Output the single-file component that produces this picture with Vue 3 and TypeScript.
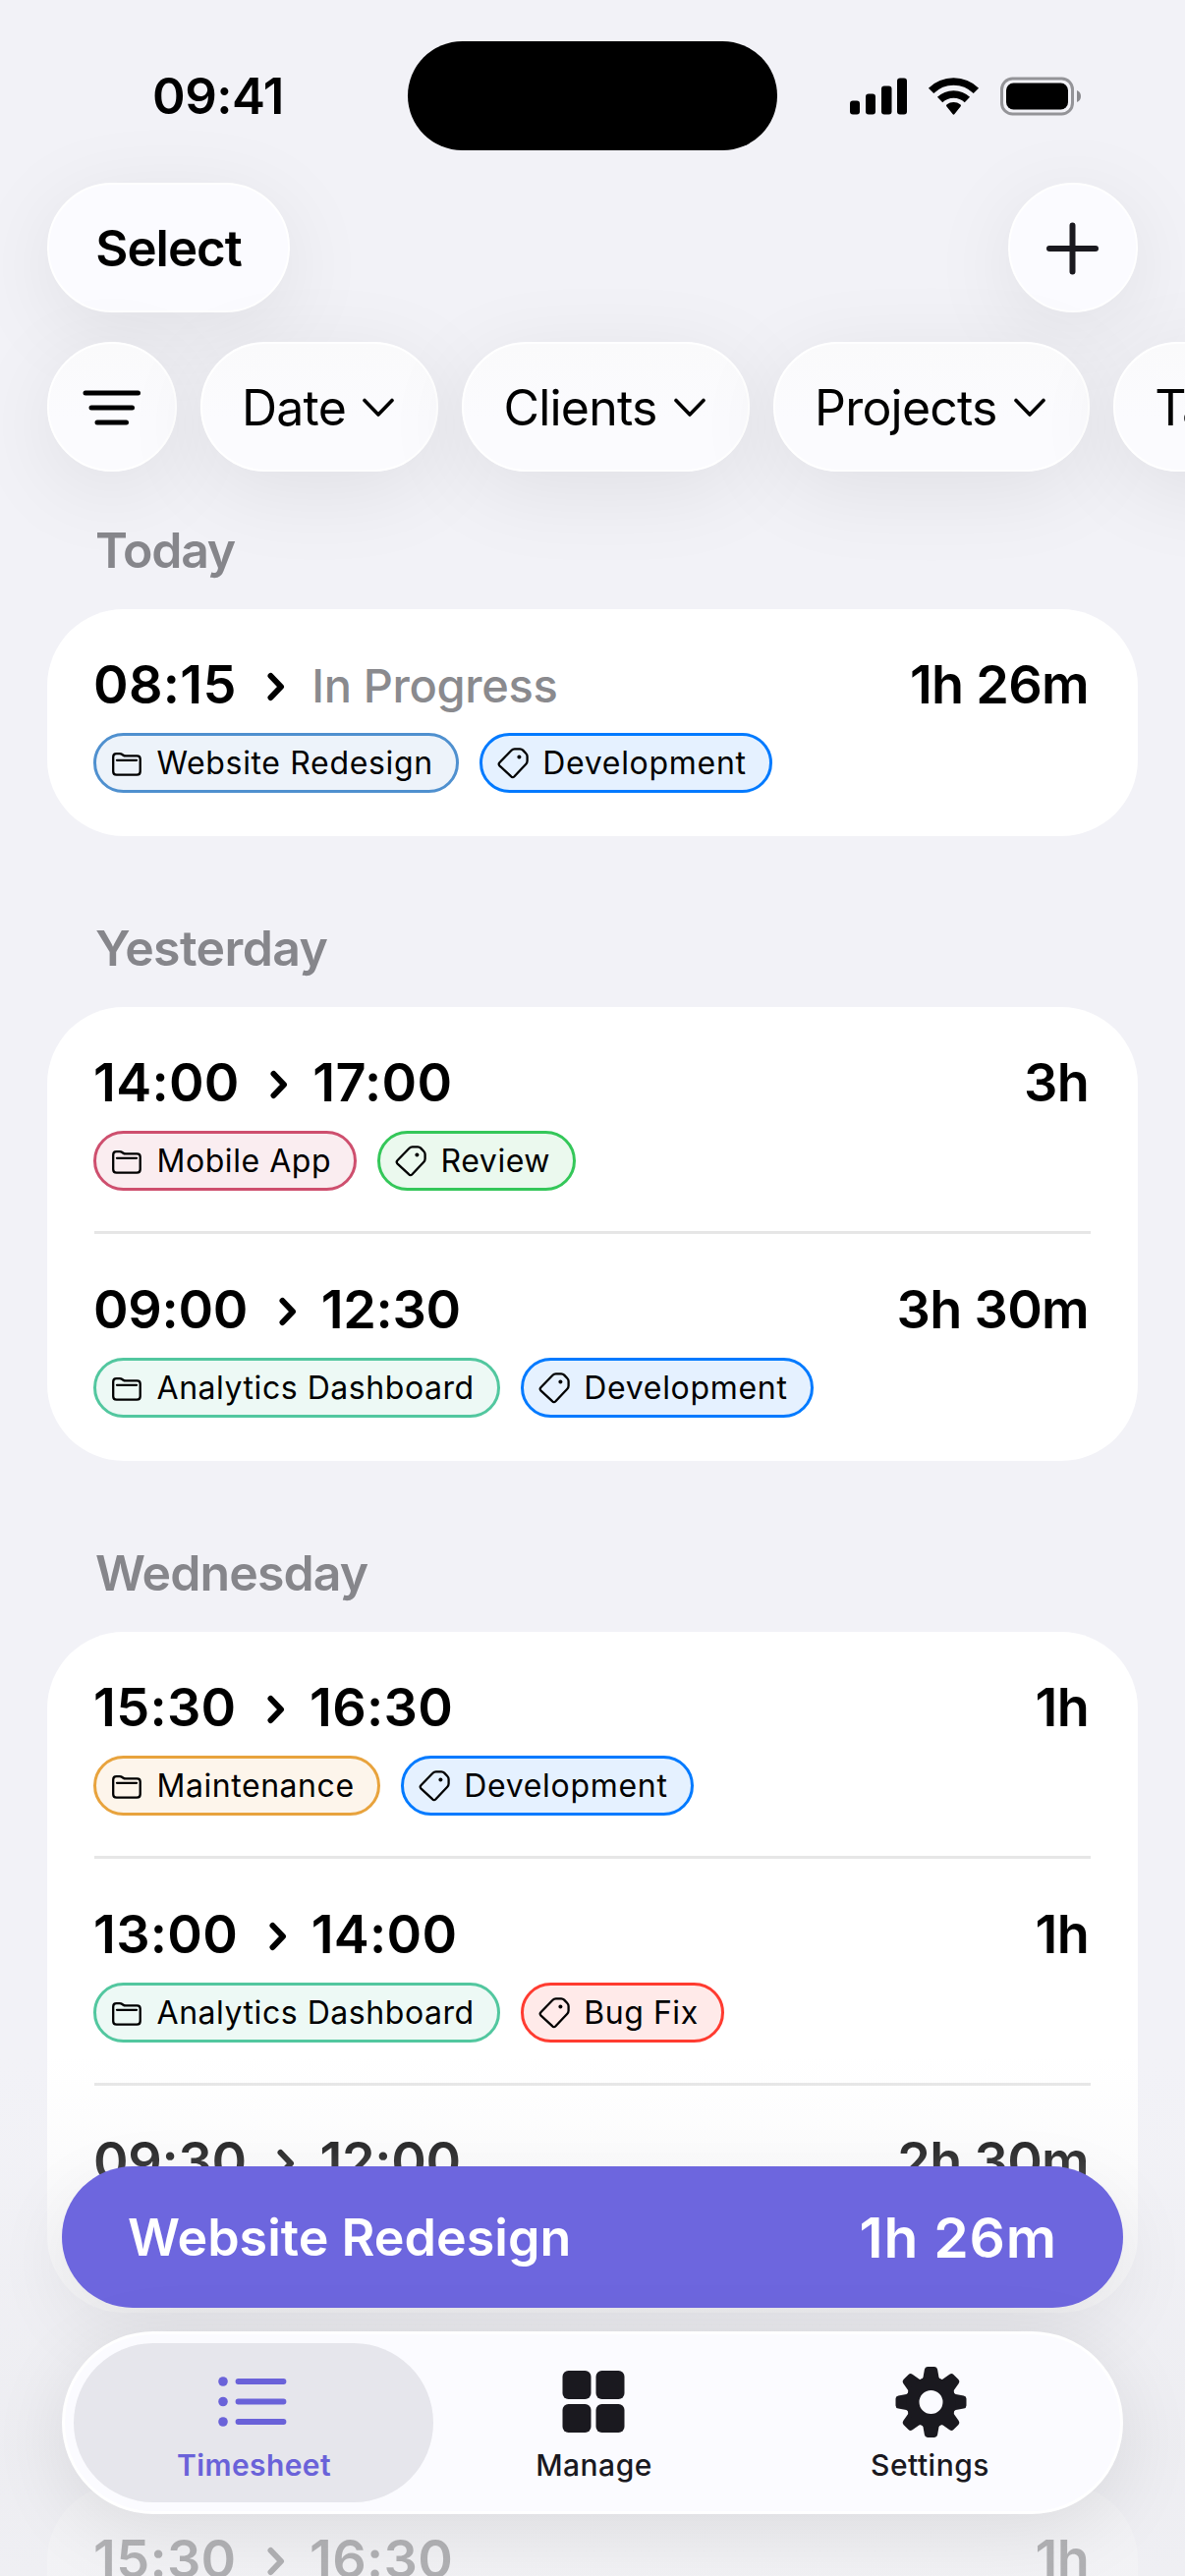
<script setup lang="ts">
type Tone = 'website' | 'dev' | 'mobile' | 'review' | 'analytics' | 'maintenance' | 'bug'

interface Chip {
  kind: 'folder' | 'tag'
  label: string
  tone: Tone
}

interface Entry {
  start: string
  end: string | null
  duration: string
  chips: Chip[]
}

interface Day {
  title: string
  entries: Entry[]
}

const project = (label: string, tone: Tone): Chip => ({ kind: 'folder', label, tone })
const tag = (label: string, tone: Tone): Chip => ({ kind: 'tag', label, tone })

const filters: string[] = ['Date', 'Clients', 'Projects', 'Tags']

const days: Day[] = [
  {
    title: 'Today',
    entries: [
      {
        start: '08:15',
        end: null,
        duration: '1h 26m',
        chips: [project('Website Redesign', 'website'), tag('Development', 'dev')],
      },
    ],
  },
  {
    title: 'Yesterday',
    entries: [
      {
        start: '14:00',
        end: '17:00',
        duration: '3h',
        chips: [project('Mobile App', 'mobile'), tag('Review', 'review')],
      },
      {
        start: '09:00',
        end: '12:30',
        duration: '3h 30m',
        chips: [project('Analytics Dashboard', 'analytics'), tag('Development', 'dev')],
      },
    ],
  },
  {
    title: 'Wednesday',
    entries: [
      {
        start: '15:30',
        end: '16:30',
        duration: '1h',
        chips: [project('Maintenance', 'maintenance'), tag('Development', 'dev')],
      },
      {
        start: '13:00',
        end: '14:00',
        duration: '1h',
        chips: [project('Analytics Dashboard', 'analytics'), tag('Bug Fix', 'bug')],
      },
      { start: '09:30', end: '12:00', duration: '2h 30m', chips: [] },
    ],
  },
  {
    title: '',
    entries: [{ start: '15:30', end: '16:30', duration: '1h', chips: [] }],
  },
]

const isWide = (time: string): boolean => /^(09|12)/.test(time)

const teeth: number[] = [0, 45, 90, 135, 180, 225, 270, 315]
</script>

<template>
  <div class="screen">
    <header class="top">
      <div class="status">
        <span class="clock">09:41</span>
        <div class="island"></div>
        <svg class="signals" width="236" height="40" viewBox="0 0 236 40">
          <rect x="0" y="24.5" width="10" height="14" rx="3" />
          <rect x="16" y="17.500" width="10" height="21" rx="3" />
          <rect x="32" y="9.500" width="10.500" height="29" rx="3" />
          <rect x="48" y="1.500" width="10" height="37" rx="3" />
          <g fill="none" stroke="#000" stroke-width="7.600">
            <path d="M82.600 14.400a32.500 32.500 0 0 1 45.800 0" />
            <path d="M91.600 23.600a20 20 0 0 1 27.800 0" />
          </g>
          <path d="M98.300 30.200q-.8-1 .4-1.900a10.800 10.800 0 0 1 13.600 0q1.200.9.400 1.900l-6.200 7.900q-1 1.100-2 0z" />
          <rect x="154.500" y="2" width="72" height="36" rx="11" fill="none" stroke="#949498" stroke-width="3" />
          <rect x="159" y="6.500" width="63" height="27" rx="7.500" />
          <path d="M231 14q4 1.600 4 6t-4 6z" fill="#8a8a8e" />
        </svg>
      </div>
      <div class="toolbar">
        <button class="glass select">Select</button>
        <button class="glass round">
          <svg width="56" height="56" viewBox="0 0 56 56">
            <path d="M27.500 5.500v47M4 29h47" fill="none" stroke="#1a191f" stroke-width="6" stroke-linecap="round" />
          </svg>
        </button>
      </div>
      <div class="filters">
        <button class="glass round">
          <svg width="60" height="40" viewBox="0 0 60 40">
            <path
              d="M3 6H56.500M9 21H50.500M15 36H44.500"
              fill="none"
              stroke="#000"
              stroke-width="5"
              stroke-linecap="round"
            />
          </svg>
        </button>
        <button v-for="f in filters" :key="f" class="glass filter">
          <span class="filter-text">{{ f }}</span>
          <svg width="32" height="20" viewBox="0 0 32 20">
            <path
              d="M2 3.500l14 14.500L30 3.500"
              fill="none"
              stroke="#000"
              stroke-width="3.600"
              stroke-linecap="round"
              stroke-linejoin="round"
            />
          </svg>
        </button>
      </div>
    </header>

    <main class="list">
      <section v-for="(day, di) in days" :key="di" class="day">
        <h2 :class="['day-title', day.title.toLowerCase()]">{{ day.title }}</h2>
        <div class="card">
          <article v-for="(entry, ei) in day.entries" :key="ei" class="entry">
            <div class="times">
              <span :class="['time', { wide: isWide(entry.start) }]">{{ entry.start }}</span>
              <svg class="arrow" width="18" height="30" viewBox="0 0 18 30">
                <path
                  d="M3.500 4l10.500 11L3.500 26"
                  fill="none"
                  stroke="#000"
                  stroke-width="6"
                  stroke-linecap="round"
                  stroke-linejoin="round"
                />
              </svg>
              <span v-if="entry.end" :class="['time', 'end', { wide: isWide(entry.end) }]">{{ entry.end }}</span>
              <span v-else class="progress">In Progress</span>
              <span class="duration">{{ entry.duration }}</span>
            </div>
            <div class="chips">
              <span v-for="c in entry.chips" :key="c.label" :class="['chip', c.tone]">
                <svg v-if="c.kind === 'folder'" class="chip-icon" width="32" height="32" viewBox="0 0 32 32">
                  <g fill="none" stroke="#000" stroke-width="2.300" stroke-linejoin="round" stroke-linecap="round">
                    <path
                      d="M2.200 24.300V9.500q0-3.300 3.300-3.300h3.300q1.500 0 2.600.8l1 .7q1 .7 2.400.7h11.700q3.200 0 3.200 3.200v12.700q0 3.400-3.400 3.400H5.600q-3.400 0-3.400-3.400z"
                    />
                    <path d="M6 12.800h20" />
                  </g>
                </svg>
                <svg v-else class="chip-icon" width="32" height="32" viewBox="0 0 32 32">
                  <path
                    d="M14.500 2.800q1.300-1.400 3.200-1.400h5.500q1.800 0 3 1.200l3.200 3.400q1.200 1.200 1.200 3v4.600q0 1.800-1.300 3.100L17.500 29.200q-1.800 1.800-3.500 0L2.600 18.600q-1.800-1.800 0-3.600z"
                    fill="none"
                    stroke="#000"
                    stroke-width="2.300"
                    stroke-linejoin="round"
                  />
                  <circle cx="22.400" cy="9.500" r="2" />
                </svg>
                {{ c.label }}
              </span>
            </div>
          </article>
        </div>
      </section>
    </main>

    <div class="fade"></div>

    <footer class="dock">
      <div class="running">
        <span class="running-name">Website Redesign</span>
        <span class="running-time">1h 26m</span>
      </div>
      <nav class="tabs">
        <a class="tab active">
          <svg width="80" height="76" viewBox="0 0 80 76">
            <g fill="#6a62d9">
              <circle cx="7" cy="17" r="4.800" />
              <circle cx="7" cy="37.500" r="4.800" />
              <circle cx="7" cy="58" r="4.800" />
            </g>
            <path
              d="M22.500 17h46M22.500 37.500h46M22.500 58h46"
              fill="none"
              stroke="#6a62d9"
              stroke-width="5.800"
              stroke-linecap="round"
            />
          </svg>
          <span>Timesheet</span>
        </a>
        <a class="tab">
          <svg width="76" height="76" viewBox="0 0 76 76" fill="#1a191f">
            <rect x="5.500" y="6" width="29" height="29" rx="6" />
            <rect x="39.500" y="6" width="29" height="29" rx="6" />
            <rect x="5.500" y="40" width="29" height="29" rx="6" />
            <rect x="39.500" y="40" width="29" height="29" rx="6" />
          </svg>
          <span>Manage</span>
        </a>
        <a class="tab last">
          <svg width="76" height="76" viewBox="-38.500 -38 76 76">
            <g fill="#1a191f">
              <path
                v-for="a in teeth"
                :key="a"
                :transform="`rotate(${a})`"
                d="M-11-22.500q2.500-.5 3-2.700l1.400-8.100q.5-2.700 3-2.700h7.200q2.500 0 3 2.700L8-25.200q.5 2.200 3 2.700L8-14H-8z"
              />
            </g>
            <circle r="18.700" fill="none" stroke="#1a191f" stroke-width="13.400" />
          </svg>
          <span>Settings</span>
        </a>
      </nav>
    </footer>
  </div>
</template>

<style>
body {
  background: #f2f2f7;
  overflow: hidden;
}
</style>

<style scoped>
.screen {
  position: relative;
  width: 1206px;
  height: 2622px;
  overflow: hidden;
  background: #f2f2f7;
  font-family: Inter, 'Liberation Sans', sans-serif;
  color: #000;
  box-sizing: border-box;
}

.screen * {
  box-sizing: border-box;
}

button {
  font: inherit;
  color: inherit;
  border: 0;
  margin: 0;
  padding: 0;
}

svg {
  display: block;
  flex: none;
}

.status {
  display: grid;
  grid-template-columns: 415px 376px 1fr;
  height: 186px;
  padding-top: 42px;
  align-items: start;
}

.clock {
  padding: 26px 0 0 155px;
  font-size: 51px;
  line-height: 60px;
  font-weight: 600;
  letter-spacing: -0.5px;
}

.island {
  height: 111px;
  border-radius: 56px;
  background: #000;
}

.signals {
  margin: 35.5px 0 0 74px;
}

.toolbar {
  display: flex;
  justify-content: space-between;
  padding: 0 48px;
}

.glass {
  display: flex;
  align-items: center;
  flex: none;
  height: 132px;
  border-radius: 66px;
  background: #fbfbff;
  border: 2px solid #fff;
  box-shadow: 0 18px 90px rgba(0, 0, 0, 0.08);
}

.select {
  width: 247px;
  padding-top: 1px;
  justify-content: center;
  font-size: 51px;
  font-weight: 600;
  letter-spacing: -1px;
}

.round {
  width: 132px;
  justify-content: center;
}

.filters {
  display: flex;
  gap: 24px;
  padding: 30px 0 0 48px;
}

.filters .glass {
  background: linear-gradient(#fafafb, #fbfbfe 60%);
}

.filter {
  padding: 0 43.5px 0 40px;
  gap: 17px;
}

.filter-text {
  padding-top: 2px;
  font-size: 50px;
  font-weight: 400;
  letter-spacing: -0.8px;
}

.day {
  display: flex;
  flex-direction: column;
  padding: 84px 48px 0;
}

.day:first-child {
  padding-top: 50px;
}

.day-title {
  height: 60px;
  margin: 0 0 30px 49px;
  font-size: 50px;
  line-height: 60px;
  font-weight: 600;
  letter-spacing: -0.9px;
  color: #86868b;
}

.day-title.today {
  letter-spacing: -1.2px;
}

.day-title.yesterday {
  letter-spacing: -0.6px;
}

.card {
  border-radius: 78px;
  background: #fff;
}

.entry {
  position: relative;
  height: 231px;
  padding: 47px 50px 0 47px;
}

.entry:not(:last-child)::after {
  content: '';
  position: absolute;
  left: 48px;
  right: 48px;
  bottom: 0;
  height: 3px;
  background: #e6e6e6;
}

.times {
  display: flex;
  align-items: center;
  height: 60px;
  margin-bottom: 19px;
}

.time,
.duration {
  font-size: 54px;
  line-height: 60px;
  font-weight: 600;
  letter-spacing: 0.3px;
}

.time.wide {
  letter-spacing: -0.3px;
}

.time.end {
  margin-left: -2px;
}

.arrow {
  margin: 3px 27px 0 31.5px;
}

.progress {
  padding-top: 2px;
  font-size: 47px;
  line-height: 60px;
  font-weight: 500;
  letter-spacing: -0.35px;
  color: #8a8a8e;
}

.duration {
  margin-left: auto;
  letter-spacing: -0.7px;
}

.chips {
  display: flex;
  gap: 21px;
}

.chip {
  display: flex;
  align-items: center;
  height: 61px;
  padding: 0 23px 0 15px;
  border: 3px solid;
  border-radius: 31px;
  font-size: 32px;
  font-weight: 400;
  letter-spacing: 0.55px;
}

.chip-icon {
  margin-right: 14.5px;
}

.website {
  border-color: #4f90cf;
  background: #edf3fa;
  letter-spacing: 0.65px;
}

.dev {
  border-color: #007aff;
  background: #e5f1ff;
  letter-spacing: 0.7px;
}

.mobile {
  border-color: #ce4f6e;
  background: #faedf0;
}

.review {
  border-color: #34c759;
  background: #ebf9ee;
}

.analytics {
  border-color: #52c79f;
  background: #edf9f5;
}

.maintenance {
  border-color: #e8a33d;
  background: #fdf5eb;
}

.bug {
  border-color: #ff3b30;
  background: #ffeae9;
}

.fade {
  position: absolute;
  left: 0;
  right: 0;
  bottom: 0;
  height: 530px;
  background: linear-gradient(
    rgba(240, 240, 243, 0) 0%,
    rgba(240, 240, 243, 0.2) 18%,
    rgba(238, 238, 242, 0.55) 40%,
    rgba(236, 236, 240, 0.78) 75%,
    rgba(238, 238, 242, 0.74) 100%
  );
}

.dock {
  position: absolute;
  left: 63px;
  right: 63px;
  bottom: 63px;
  display: flex;
  flex-direction: column;
  gap: 24px;
}

.running {
  display: flex;
  align-items: center;
  justify-content: space-between;
  height: 144px;
  padding: 0 67px 0 67px;
  border-radius: 72px;
  background: #6d66de;
  color: #fff;
  font-weight: 600;
  box-shadow: 0 24px 80px rgba(0, 0, 0, 0.07);
}

.running-name {
  font-size: 52px;
  letter-spacing: 0;
}

.running-time {
  font-size: 57px;
  letter-spacing: 0.8px;
}

.tabs {
  display: flex;
  height: 186px;
  padding: 9px;
  border: 3px solid #fff;
  border-radius: 93px;
  background: #fbfbff;
  box-shadow: 0 18px 80px rgba(0, 0, 0, 0.09);
}

.tab {
  display: flex;
  flex-direction: column;
  align-items: center;
  width: 366px;
  height: 162px;
  padding: 22px 0 0 3px;
  border-radius: 81px;
  font-size: 30px;
  line-height: 36px;
  font-weight: 500;
  letter-spacing: 0.5px;
  color: #1a191f;
}

.tab + .tab {
  width: 324px;
}

.tab.last {
  width: 360px;
}

.tab span {
  margin-top: 8px;
}

.tab.active {
  background: #e6e6ec;
  color: #6a62d9;
  font-weight: 600;
  letter-spacing: 0.4px;
}

.tab.active span {
  margin-right: 2px;
}
</style>
